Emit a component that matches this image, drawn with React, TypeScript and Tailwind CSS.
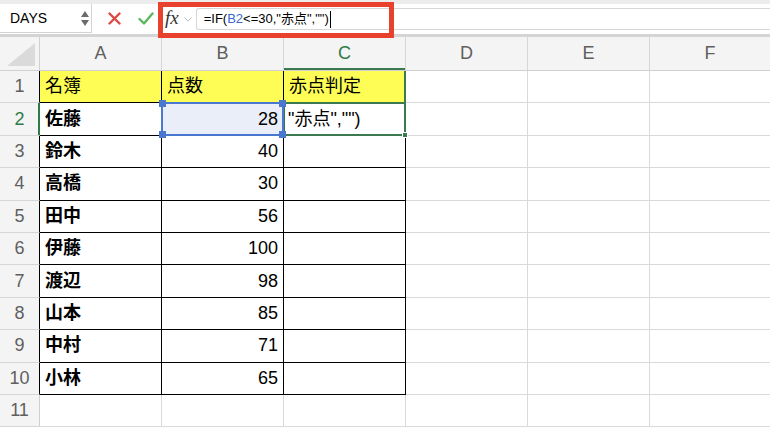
import React from 'react';

const font = { fontFamily: '"Liberation Sans", "Noto Sans CJK JP", sans-serif' };

const rows = [
  { name: '佐藤', score: '28' },
  { name: '鈴木', score: '40' },
  { name: '高橋', score: '30' },
  { name: '田中', score: '56' },
  { name: '伊藤', score: '100' },
  { name: '渡辺', score: '98' },
  { name: '山本', score: '85' },
  { name: '中村', score: '71' },
  { name: '小林', score: '65' },
];

const cols = ['A', 'B', 'C', 'D', 'E', 'F'];

const Handle = ({ className }: { className: string }) => (
  <div className={`absolute w-[7px] h-[7px] bg-[#4a78d0] ${className}`} />
);

const RowHead = ({ n, active, inTable }: { n: number; active?: boolean; inTable?: boolean }) => (
  <div
    className={`w-[40px] shrink-0 flex items-center justify-center bg-[#f4f4f4] border-b border-[#d6d6d6] border-r text-[18px] ${
      active ? 'text-[#2f7a47] border-r-[#2f7a47] shadow-[inset_-1px_0_0_#2f7a47]' : 'text-[#5f5f5f]'
    } ${inTable && !active ? 'border-r-black' : ''} ${!inTable ? 'border-r-[#d0d0d0]' : ''}`}
  >
    {n}
  </div>
);

const EmptyCells = () => (
  <>
    <div className="w-[122px] shrink-0 border-r border-b border-[#d9d9d9]" />
    <div className="w-[122px] shrink-0 border-r border-b border-[#d9d9d9]" />
    <div className="flex-1 border-b border-[#d9d9d9]" />
  </>
);

export default function App() {
  return (
    <div className="w-[770px] h-[429px] overflow-hidden bg-white relative select-none" style={font}>
      {/* formula bar */}
      <div className="h-[37px] flex items-start bg-white border-t-[4px] border-[#ececec] border-b-[3px] border-b-[#d4d4d4]">
        <div className="w-[92px] h-[29px] border border-[#d3d3d3] border-l-0 border-t-0 flex items-center justify-between pl-[10px] pr-[2px] text-[14px] text-black">
          <span>DAYS</span>
          <div className="flex flex-col items-center gap-[3px]">
            <svg width="8" height="6" viewBox="0 0 8 6"><path d="M4 0 L8 6 L0 6 Z" fill="#6b6b6b" /></svg>
            <svg width="8" height="6" viewBox="0 0 8 6"><path d="M0 0 L8 0 L4 6 Z" fill="#6b6b6b" /></svg>
          </div>
        </div>
        <div className="flex items-center h-[29px]">
          <svg className="ml-[16px]" width="13" height="13" viewBox="0 0 13 13">
            <path d="M1.5 1.5 L11.5 11.5 M11.5 1.5 L1.5 11.5" stroke="#dc4a43" strokeWidth="2.4" strokeLinecap="round" />
          </svg>
          <svg className="ml-[17px]" width="16" height="13" viewBox="0 0 16 13">
            <path d="M1.5 7 L6 11.5 L14.5 1.5" stroke="#5cb85c" strokeWidth="2.4" fill="none" strokeLinecap="round" strokeLinejoin="round" />
          </svg>
          <span
            className="ml-[11px] text-[19px] italic text-[#333] leading-none mt-[-2px]"
            style={{ fontFamily: '"Liberation Serif", serif' }}
          >
            fx
          </span>
          <svg className="ml-[5px] mt-[2px]" width="8" height="5" viewBox="0 0 8 5">
            <path d="M0.5 0.5 L4 4 L7.5 0.5" stroke="#bdbdbd" strokeWidth="1" fill="none" />
          </svg>
        </div>
        <div className="flex-1 ml-[4px] mt-[4px] h-[22px] border border-r-0 border-[#d6d6d6] rounded-l-[3px] flex items-center pl-[7px] text-[13px] text-black">
          <span>=IF(</span>
          <span className="text-[#3868cf]">B2</span>
          <span>{'<=30,"赤点","")'}</span>
          <span className="w-[1px] h-[17px] bg-black ml-[1px]" />
        </div>
      </div>

      {/* red annotation box */}
      <div className="absolute left-[158px] top-[2px] w-[236px] h-[36px] border-[5px] border-[#e8412e] pointer-events-none" />

      {/* column headers */}
      <div className="flex h-[34px] bg-[#f4f4f4] border-b border-[#d0d0d0]">
        <div className="w-[40px] shrink-0 border-r border-[#d0d0d0] flex items-end justify-end pr-[4px] pb-[4px]">
          <svg width="28" height="23" viewBox="0 0 28 23"><path d="M28 0 L28 23 L0 23 Z" fill="#dadada" /></svg>
        </div>
        {cols.map((c) => (
          <div
            key={c}
            className={`${c === 'F' ? 'flex-1' : 'w-[122px] shrink-0 border-r border-[#d6d6d6]'} flex items-center justify-center text-[18px] ${
              c === 'C' ? 'text-[#2f7a47] shadow-[inset_0_-2px_0_#3b7a50]' : 'text-[#5f5f5f]'
            }`}
          >
            {c}
          </div>
        ))}
      </div>

      {/* row 1 */}
      <div className="flex h-[32.4px]">
        <RowHead n={1} inTable />
        <div className="w-[122px] shrink-0 bg-[#fdfd55] border-r border-b border-black flex items-center pl-[5px] text-[18px]">名簿</div>
        <div className="w-[122px] shrink-0 bg-[#fdfd55] border-r border-b border-black flex items-center pl-[5px] text-[18px]">点数</div>
        <div className="w-[122px] shrink-0 bg-[#fdfd55] border-r border-b border-black border-r-[#3b7a50] shadow-[inset_-1px_0_0_#3b7a50] flex items-center pl-[5px] text-[18px]">赤点判定</div>
        <EmptyCells />
      </div>

      {/* rows 2-10 */}
      {rows.map((r, i) => {
        const n = i + 2;
        const first = n === 2;
        return (
          <div key={n} className="flex h-[32.4px]">
            <RowHead n={n} inTable active={first} />
            <div className="w-[122px] shrink-0 border-r border-b border-black flex items-center pl-[5px] text-[18px] font-bold">
              {r.name}
            </div>
            <div
              className={`relative w-[122px] shrink-0 border-r border-b border-black flex items-center justify-end pr-[5px] text-[18px] ${
                first ? 'bg-[#e9eef8]' : ''
              }`}
            >
              {r.score}
              {first && (
                <div className="absolute -left-[1px] -top-[1px] -right-[1px] -bottom-[1px] border-2 border-[#4a78d0] z-20 pointer-events-none">
                  <Handle className="-left-[4px] -top-[4px]" />
                  <Handle className="-right-[4px] -top-[4px]" />
                  <Handle className="-left-[4px] -bottom-[4px]" />
                  <Handle className="-right-[4px] -bottom-[4px]" />
                </div>
              )}
            </div>
            <div className="relative w-[122px] shrink-0 border-r border-b border-black flex items-center pl-[4px] text-[18px]">
              {first && (
                <>
                  <span>{'"赤点","")'}</span>
                  <div className="absolute -left-[1px] -top-[1px] -right-[1px] -bottom-[1px] border-2 border-[#3b7a50] z-10 pointer-events-none">
                    <div className="absolute -right-[4px] -bottom-[4px] w-[6px] h-[6px] bg-[#3b7a50] border border-white" />
                  </div>
                </>
              )}
            </div>
            <EmptyCells />
          </div>
        );
      })}

      {/* row 11 */}
      <div className="flex h-[32.4px]">
        <RowHead n={11} />
        <div className="w-[122px] shrink-0 border-r border-b border-[#d9d9d9]" />
        <div className="w-[122px] shrink-0 border-r border-b border-[#d9d9d9]" />
        <div className="w-[122px] shrink-0 border-r border-b border-[#d9d9d9]" />
        <EmptyCells />
      </div>
    </div>
  );
}
